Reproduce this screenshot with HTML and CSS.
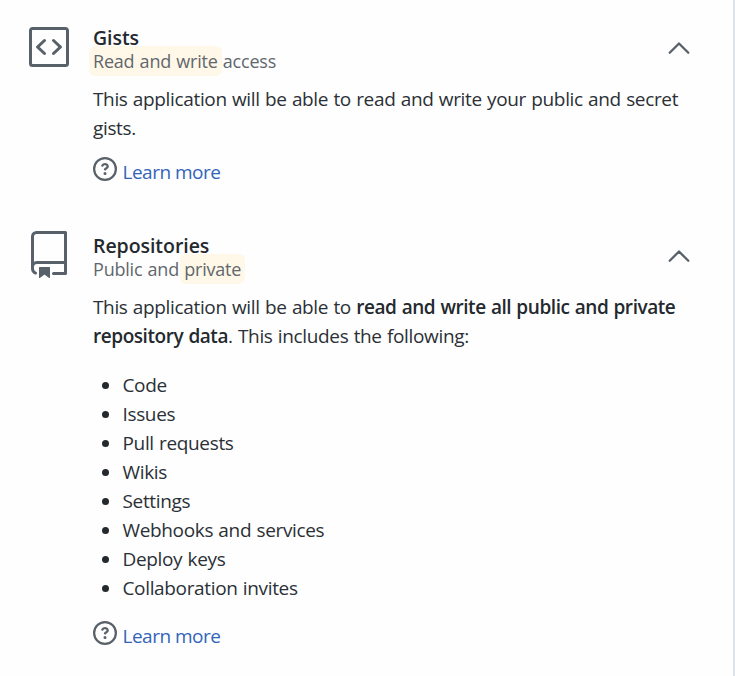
FILE: index.html
```html
<!DOCTYPE html>
<html lang="en">
<head>
<meta charset="utf-8">
<title>Permissions</title>
<link rel="stylesheet" href="styles.css">
</head>
<body>
<svg class="sprite" aria-hidden="true">
  <symbol id="question" viewBox="0 0 16 16"><path fill-rule="evenodd" d="M8 1.5a6.5 6.5 0 100 13 6.5 6.5 0 000-13zM0 8a8 8 0 1116 0A8 8 0 010 8zm9 3a1 1 0 11-2 0 1 1 0 012 0zM6.92 6.085c.081-.16.19-.299.34-.398.145-.097.371-.187.74-.187.28 0 .553.087.738.225A.613.613 0 019 6.25c0 .177-.04.264-.077.318a.956.956 0 01-.277.245c-.076.051-.158.1-.258.161l-.007.004a7.728 7.728 0 00-.313.195 2.416 2.416 0 00-.692.661.75.75 0 001.248.832.956.956 0 01.276-.245 6.3 6.3 0 01.26-.16l.006-.004c.093-.057.204-.123.313-.195.222-.149.487-.355.692-.662.214-.32.329-.702.329-1.15 0-.76-.36-1.348-.863-1.725A2.76 2.76 0 008 4c-.631 0-1.155.16-1.572.438-.413.276-.68.638-.849.977a.75.75 0 101.342.67z"/></symbol>
  <symbol id="chevron" viewBox="0 0 24 14"><path d="M2.7 11.8 12 2.5l9.3 9.3" fill="none" stroke="currentColor" stroke-width="2.3" stroke-linecap="round" stroke-linejoin="round"/></symbol>
</svg>
<main class="permissions">
  <section class="permission gists">
    <svg class="icon" viewBox="0 0 24 24"><path d="M10.3 8.24a.75.75 0 01-.04 1.06L7.352 12l2.908 2.7a.75.75 0 11-1.02 1.1l-3.5-3.25a.75.75 0 010-1.1l3.5-3.25a.75.75 0 011.06.04zm3.44 1.06a.75.75 0 111.02-1.1l3.5 3.25a.75.75 0 010 1.1l-3.5 3.25a.75.75 0 11-1.02-1.1l2.908-2.7-2.908-2.7z"/><path fill-rule="evenodd" d="M2 3.75C2 2.784 2.784 2 3.75 2h16.5c.966 0 1.75.784 1.75 1.75v16.5A1.75 1.75 0 0120.25 22H3.75A1.75 1.75 0 012 20.25V3.75zm1.75-.25a.25.25 0 00-.25.25v16.5c0 .138.112.25.25.25h16.5a.25.25 0 00.25-.25V3.75a.25.25 0 00-.25-.25H3.75z"/></svg>
    <div class="content">
      <header class="head">
        <div>
          <h2 class="title">Gists</h2>
          <p class="access"><mark class="mark">Read and write</mark> access</p>
        </div>
        <svg class="chevron"><use href="#chevron"/></svg>
      </header>
      <p class="text">This application will be able to read and write your public and secret<br>gists.</p>
      <a class="learn"><svg class="question"><use href="#question"/></svg><span>Learn more</span></a>
    </div>
  </section>
  <section class="permission">
    <svg class="icon" viewBox="0 0 24 24"><path fill-rule="evenodd" d="M3 2.75A2.75 2.75 0 015.75 0h14.5a.75.75 0 01.75.75v20.5a.75.75 0 01-.75.75h-6a.75.75 0 010-1.5h5.25v-4H6A1.5 1.5 0 004.5 18v.75c0 .716.43 1.334 1.05 1.605a.75.75 0 01-.6 1.374A3.25 3.25 0 013 18.75v-16zM19.5 1.5V15H6c-.546 0-1.059.146-1.5.401V2.75c0-.69.56-1.25 1.25-1.25H19.5z"/><path d="M7 18.25a.25.25 0 01.25-.25h5a.25.25 0 01.25.25v5.01a.25.25 0 01-.397.201l-2.206-1.604a.25.25 0 00-.294 0L7.397 23.46a.25.25 0 01-.397-.2v-5.01z"/></svg>
    <div class="content">
      <header class="head">
        <div>
          <h2 class="title">Repositories</h2>
          <p class="access">Public and <mark class="mark">private</mark></p>
        </div>
        <svg class="chevron"><use href="#chevron"/></svg>
      </header>
      <p class="text">This application will be able to <strong class="strong">read and write all public and private<br>repository data</strong>. This includes the following:</p>
      <ul class="list">
        <li>Code</li>
        <li>Issues</li>
        <li>Pull requests</li>
        <li>Wikis</li>
        <li>Settings</li>
        <li>Webhooks and services</li>
        <li>Deploy keys</li>
        <li>Collaboration invites</li>
      </ul>
      <a class="learn"><svg class="question"><use href="#question"/></svg><span>Learn more</span></a>
    </div>
  </section>
</main>
</body>
</html>
```
FILE: styles.css
```css
* { box-sizing: border-box; }
body { margin: 0; background: #fefefe; color: #2b3036; font: 400 19px/29px "Open Sans", "Noto Sans", sans-serif; letter-spacing: -0.35px; word-spacing: 0.7px; overflow: hidden; }
h2, p, ul { margin: 0; }
.sprite { display: none; }
.permissions { height: 676px; padding: 23px 0 0 25px; border-right: 2px solid #dde3ea; }
.permission { display: flex; gap: 20px; }
.gists { height: 208px; }
.icon { width: 48px; height: 48px; flex: none; fill: #586069; }
.content { flex: 1; padding-top: 3px; }
.head { display: flex; justify-content: space-between; height: 59px; }
.title { color: #24292e; font-size: 19.5px; font-weight: 600; line-height: 24px; letter-spacing: -0.05px; }
.access { color: #62676d; font-size: 18px; line-height: 22px; letter-spacing: -0.2px; }
.mark { color: inherit; background: #fff8e8; border-radius: 6px; padding: 3px 4px; margin: 0 -4px; }
.chevron { width: 24px; height: 14px; margin: 15px 42px 0 0; color: #586069; }
.text { white-space: nowrap; }
.strong { color: #24292e; font-weight: 600; letter-spacing: -0.44px; }
.learn { display: flex; gap: 5.5px; height: 29px; margin-top: 14px; color: #3264ba; letter-spacing: -0.5px; word-spacing: 0; }
.learn span { padding-top: 1px; }
.question { width: 24px; height: 24px; fill: #586069; }
.list { list-style: none; padding: 0; margin: 20px 0 18px; }
.list li { display: flex; align-items: center; height: 29px; }
.list li::before { content: ""; width: 7px; height: 7px; margin: 0 13.5px 0 9px; border-radius: 50%; background: #24292e; }
```
